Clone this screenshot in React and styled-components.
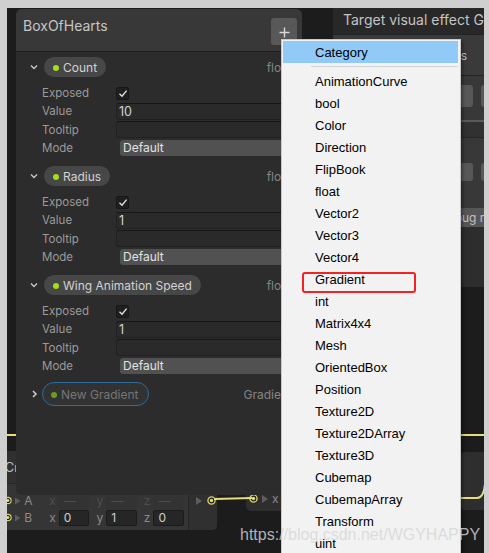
import React from 'react';
import styled, { createGlobalStyle } from 'styled-components';

const GlobalStyle = createGlobalStyle`
  html, body {
    margin: 0;
    padding: 0;
    background: #cfcfcf;
    overflow: hidden;
  }
  body {
    font-family: Inter, "Noto Sans", sans-serif;
  }
`;

const properties = [
  { name: 'Count', type: 'float', value: '10' },
  { name: 'Radius', type: 'float', value: '1' },
  { name: 'Wing Animation Speed', type: 'float', value: '1' },
];

const menuItems = [
  'AnimationCurve', 'bool', 'Color', 'Direction', 'FlipBook', 'float',
  'Vector2', 'Vector3', 'Vector4', 'Gradient', 'int', 'Matrix4x4', 'Mesh',
  'OrientedBox', 'Position', 'Texture2D', 'Texture2DArray', 'Texture3D',
  'Cubemap', 'CubemapArray', 'Transform', 'uint',
];

const ChevronDown = () => (
  <svg width="8" height="6" viewBox="0 0 8 6">
    <path d="M1 1.5 L4 4.5 L7 1.5" fill="none" stroke="#c8c8c8" strokeWidth="1.4" />
  </svg>
);

const ChevronRight = () => (
  <svg width="8" height="8" viewBox="0 0 8 8">
    <path d="M3 1 L6 4 L3 7" fill="none" stroke="#d0d0d0" strokeWidth="1.5" />
  </svg>
);

const Check = () => (
  <svg width="10" height="9" viewBox="0 0 10 9">
    <path d="M1.5 4.8 L4 7.2 L8.6 1.6" fill="none" stroke="#e6e6e6" strokeWidth="1.3" />
  </svg>
);

const Arrow = () => (
  <svg width="7" height="5" viewBox="0 0 7 5">
    <path d="M0 0 H7 L3.5 5 Z" fill="#c4c4c4" />
  </svg>
);

const Tri = () => (
  <svg width="6" height="8" viewBox="0 0 6 8">
    <path d="M0 0 L6 4 L0 8 Z" fill="#5e5e5e" />
  </svg>
);

const Port = ({ $filled = true }) => (
  <svg width="9" height="9" viewBox="0 0 9 9">
    <circle cx="4.5" cy="4.5" r="3.6" fill="#1f1f1f" stroke="#d9d36a" strokeWidth="1.3" />
    {$filled && <circle cx="4.5" cy="4.5" r="1.7" fill="#e2dc72" />}
  </svg>
);

const Frame = styled.div`
  position: relative;
  width: 489px;
  height: 553px;
  box-sizing: border-box;
  padding: 8px 5px 0 7px;
  background: #cfcfcf;
  overflow: hidden;
`;

const Canvas = styled.div`
  position: relative;
  width: 477px;
  height: 545px;
  background: #1c1c1c;
  overflow: hidden;
`;

const Edges = styled.svg`
  position: absolute;
  left: 0;
  top: 0;
  z-index: 2;
  pointer-events: none;
`;

/* graph nodes behind the panels */
const Node = styled.div`
  position: absolute;
  left: ${p => p.$x}px;
  top: ${p => p.$y}px;
  width: ${p => p.$w}px;
  height: ${p => p.$h}px;
  background: #2e2e2e;
  border-radius: 5px;
  display: flex;
  flex-direction: column;
  justify-content: flex-end;
  z-index: 1;
  font-size: 12px;
`;

const NodeTitle = styled.div`
  height: 32px;
  flex: none;
  display: flex;
  align-items: center;
  padding-left: 4px;
  color: #bdbdbd;
  font-size: 12.5px;
  background: #303030;
  border-bottom: 1px solid #262626;
  border-radius: 5px 5px 0 0;
`;

const NodeBody = styled.div`
  flex: 1;
  display: flex;
  background: #353535;
  border-radius: 0 0 5px 5px;
`;

const Inputs = styled.div`
  width: 187px;
  box-sizing: border-box;
  padding: ${p => (p.$flush ? 0 : 8)}px 0 4px 3px;
  display: flex;
  flex-direction: column;
`;

const Outputs = styled.div`
  flex: 1;
  background: #303030;
  border-left: 1px solid #272727;
  border-radius: 0 0 5px 0;
  padding: 8px 0 0 7px;
`;

const SlotRow = styled.div`
  height: 17px;
  display: flex;
  align-items: center;
  gap: ${p => p.$gap || 3}px;
  color: #8a8a8a;
`;

const SlotName = styled.span`
  width: 25px;
  margin-left: 1px;
`;

const Axis = styled.span`
  width: 7px;
  color: ${p => (p.$dim ? '#4e4e4e' : '#8a8a8a')};
`;

const AxisField = styled.div`
  width: 34px;
  height: 16px;
  box-sizing: border-box;
  margin-right: 4px;
  padding-left: 4px;
  border-radius: 2px;
  line-height: 14px;
  color: ${p => (p.$dim ? '#4e4e4e' : '#cfcfcf')};
  background: ${p => (p.$dim ? '#333333' : '#262626')};
  border: 1px solid ${p => (p.$dim ? '#333333' : '#1b1b1b')};
`;

/* blackboard */
const Blackboard = styled.section`
  position: absolute;
  left: 9px;
  top: 1px;
  width: 286px;
  height: 486px;
  background: #2c2c2c;
  border-radius: 6px;
  overflow: hidden;
  display: flex;
  flex-direction: column;
  z-index: 3;
`;

const BoardHeader = styled.header`
  height: 43px;
  flex: none;
  box-sizing: border-box;
  display: flex;
  justify-content: space-between;
  align-items: flex-start;
  padding: 8px 5px 0 7px;
  background: #383838;
  border-bottom: 1px solid #1f1f1f;
`;

const BoardTitle = styled.h1`
  margin: 0;
  font-size: 14px;
  line-height: 18px;
  font-weight: 400;
  color: #c6c6c6;
`;

const AddButton = styled.button`
  width: 26px;
  height: 27px;
  margin-top: 1px;
  padding: 2px 0 0;
  border: none;
  border-radius: 3px;
  background: #585858;
  display: flex;
  align-items: center;
  justify-content: center;
`;

const BoardBody = styled.div`
  padding-top: 3px;
`;

const Group = styled.div`
  margin-bottom: 7px;
`;

const PillRow = styled.div`
  height: 24px;
  display: flex;
  align-items: center;
  gap: 5px;
  padding: 0 10px 0 14px;
  margin-bottom: 5px;
`;

const Toggle = styled.span`
  width: 8px;
  display: flex;
  justify-content: center;
`;

const Pill = styled.div`
  height: ${p => (p.$dim ? 24 : 22)}px;
  box-sizing: border-box;
  display: inline-flex;
  align-items: center;
  gap: 4px;
  padding: 0 9px 0 ${p => (p.$dim ? 8 : 9)}px;
  margin-left: ${p => (p.$dim ? -1 : 0)}px;
  border-radius: 12px;
  white-space: nowrap;
  font-size: 12px;
  background: ${p => (p.$dim ? '#323232' : '#474747')};
  border: 1px solid ${p => (p.$dim ? '#2d6d9a' : '#2b2b2b')};
  color: ${p => (p.$dim ? '#767676' : '#d2d2d2')};
`;

const Dot = styled.span`
  width: 6px;
  height: 6px;
  border-radius: 50%;
  margin-top: 2px;
  background: ${p => (p.$dim ? '#6c9a24' : '#a2e01c')};
`;

const TypeName = styled.span`
  margin-left: auto;
  font-size: 12px;
  color: #858585;
`;

const PropRow = styled.div`
  height: 18.25px;
  display: grid;
  grid-template-columns: 74px 1fr;
  align-items: center;
  padding: 0 8px 0 26px;
`;

const PropLabel = styled.span`
  font-size: 11.5px;
  color: #9b9b9b;
`;

const CheckBox = styled.span`
  width: 13px;
  height: 13px;
  box-sizing: border-box;
  border-radius: 2px;
  background: #1f1f1f;
  border: 1px solid #171717;
  display: flex;
  align-items: center;
  justify-content: center;
`;

const TextField = styled.div`
  height: 17px;
  box-sizing: border-box;
  padding-left: 2px;
  border-radius: 3px;
  background: #2a2a2a;
  border: 1px solid #212121;
  border-top-color: #161616;
  font-size: 12.5px;
  line-height: 15px;
  color: #d4d4d4;
`;

const Dropdown = styled.div`
  height: 16px;
  margin-left: 4px;
  padding: 0 6px 0 3px;
  border-radius: 3px;
  background: #515151;
  display: flex;
  align-items: center;
  justify-content: space-between;
  font-size: 12px;
  color: #e2e2e2;
`;

/* inspector behind the menu */
const Inspector = styled.section`
  position: absolute;
  left: 326px;
  top: 0;
  width: 200px;
  height: 279px;
  background: #2d2d2d;
  display: flex;
  flex-direction: column;
  z-index: 3;
  font-size: 12px;
  color: #c0c0c0;
`;

const InspectorTitle = styled.div`
  height: 27px;
  flex: none;
  box-sizing: border-box;
  padding: 3px 0 0 10px;
  line-height: 18px;
  font-size: 14px;
  white-space: nowrap;
  overflow: hidden;
  color: #c4c4c4;
  background: #282828;
  border-bottom: 1px solid #222222;
`;

const InspectorRow = styled.div`
  height: 40px;
  display: flex;
  align-items: center;
  padding-left: 10px;
  background: #3a3a3a;
  border-bottom: 1px solid #232323;
`;

const RowText = styled.span`
  width: 124px;
  text-align: right;
  white-space: nowrap;
`;

const ButtonStrip = styled.div`
  height: ${p => p.$h}px;
  box-sizing: border-box;
  display: flex;
  gap: 8px;
  padding: ${p => p.$top}px 0 0 10px;
  background: #383838;
`;

const FlatButton = styled.span`
  width: 61px;
  height: ${p => p.$h}px;
  flex: none;
  border-radius: 3px;
  background: #585858;
`;

const Divider = styled.div`
  height: 15px;
  background: #313131;
  border-top: 2px solid #5a5a5a;
  border-bottom: 1px solid #262626;
`;

const Section = styled.div`
  display: flex;
  flex-direction: column;
  gap: 27px;
  padding-top: 25px;
  background: #383838;
`;

const ModeBar = styled.div`
  height: 19px;
  margin-left: 100px;
  padding-left: 6px;
  background: #565656;
  line-height: 19px;
  white-space: nowrap;
  overflow: hidden;
`;

/* popup menu */
const Menu = styled.ul`
  position: absolute;
  left: 274px;
  top: 31px;
  width: 180px;
  height: 530px;
  box-sizing: border-box;
  margin: 0;
  padding: 1px 2px 0 1px;
  list-style: none;
  background: #f2f2f2;
  border: 1px solid #c9c9c9;
  box-shadow: 2px 2px 3px rgba(0, 0, 0, 0.35);
  z-index: 5;
  font-family: "Liberation Sans", Arial, sans-serif;
  font-size: 13px;
  color: #000;
`;

const MenuItem = styled.li`
  height: 22px;
  line-height: 24px;
  padding-left: 32px;
  background: ${p => (p.$active ? '#91c9f7' : 'transparent')};
`;

const MenuSeparator = styled.li`
  height: 7px;
  margin-left: 28px;
  display: flex;
  align-items: center;

  &::before {
    content: '';
    flex: 1;
    border-top: 1px solid #d5d5d5;
  }
`;

const Highlight = styled.div`
  position: absolute;
  left: 295px;
  top: 264px;
  width: 114px;
  height: 21px;
  box-sizing: border-box;
  border: 2px solid #f42222;
  border-radius: 3px;
  z-index: 6;
`;

const Watermark = styled.div`
  position: absolute;
  left: 240px;
  top: 526px;
  font-family: "Liberation Sans", Arial, sans-serif;
  font-size: 16px;
  line-height: 18px;
  color: rgba(214, 214, 214, 0.82);
  white-space: nowrap;
  z-index: 10;
  pointer-events: none;
`;

const PropertyGroup = ({ prop }) => (
  <Group>
    <PillRow>
      <Toggle><ChevronDown /></Toggle>
      <Pill><Dot />{prop.name}</Pill>
      <TypeName>{prop.type}</TypeName>
    </PillRow>
    <PropRow>
      <PropLabel>Exposed</PropLabel>
      <CheckBox><Check /></CheckBox>
    </PropRow>
    <PropRow>
      <PropLabel>Value</PropLabel>
      <TextField>{prop.value}</TextField>
    </PropRow>
    <PropRow>
      <PropLabel>Tooltip</PropLabel>
      <TextField />
    </PropRow>
    <PropRow>
      <PropLabel>Mode</PropLabel>
      <Dropdown>Default<Arrow /></Dropdown>
    </PropRow>
  </Group>
);

const VectorSlot = ({ name, values, filled }) => (
  <SlotRow>
    <Port $filled={filled} />
    <Tri />
    <SlotName>{name}</SlotName>
    {['x', 'y', 'z'].map((axis, i) => (
      <React.Fragment key={axis}>
        <Axis $dim={!values}>{axis}</Axis>
        <AxisField $dim={!values}>{values ? values[i] : '—'}</AxisField>
      </React.Fragment>
    ))}
  </SlotRow>
);

export default function App() {
  return (
    <Frame>
      <GlobalStyle />
      <Canvas>
        <Node $x={-6} $y={444} $w={216} $h={78}>
          <NodeTitle>Cross Product</NodeTitle>
          <NodeBody>
            <Inputs>
              <VectorSlot name="A" filled />
              <VectorSlot name="B" values={['0', '1', '0']} />
            </Inputs>
            <Outputs>
              <SlotRow $gap={5}><Tri /><Port /></SlotRow>
            </Outputs>
          </NodeBody>
        </Node>

        <Node $x={239} $y={462} $w={80} $h={41}>
          <Inputs $flush>
            <SlotRow $gap={4}><Port /><Tri /><span>x</span></SlotRow>
          </Inputs>
        </Node>

        <Node $x={453} $y={444} $w={40} $h={58} />

        <Edges width="477" height="545">
          <path d="M0 427 H477" stroke="#e4de7c" strokeWidth="2" fill="none" />
          <path d="M207 491 L245 490" stroke="#e4de7c" strokeWidth="2" fill="none" />
          <path d="M454 490 L470 490 C474 490 477 486 478 476" stroke="#e4de7c" strokeWidth="2" fill="none" />
        </Edges>

        <Blackboard>
          <BoardHeader>
            <BoardTitle>BoxOfHearts</BoardTitle>
            <AddButton>
              <svg width="11" height="11" viewBox="0 0 11 11">
                <path d="M5.5 0.5 V10.5 M0.5 5.5 H10.5" stroke="#d8d8d8" strokeWidth="1.4" />
              </svg>
            </AddButton>
          </BoardHeader>
          <BoardBody>
            {properties.map(prop => (
              <PropertyGroup key={prop.name} prop={prop} />
            ))}
            <PillRow>
              <Toggle><ChevronRight /></Toggle>
              <Pill $dim><Dot $dim />New Gradient</Pill>
              <TypeName>Gradient</TypeName>
            </PillRow>
          </BoardBody>
        </Blackboard>

        <Inspector>
          <InspectorTitle>Target visual effect Graph</InspectorTitle>
          <InspectorRow><RowText>Show Properties</RowText></InspectorRow>
          <ButtonStrip $h={44} $top={9}>
            <FlatButton $h={22} />
            <FlatButton $h={22} />
            <FlatButton $h={22} />
          </ButtonStrip>
          <Divider />
          <Section>
            <ButtonStrip $h={18} $top={0}>
              <FlatButton $h={18} />
              <FlatButton $h={18} />
              <FlatButton $h={18} />
            </ButtonStrip>
            <ModeBar>Debug mode</ModeBar>
          </Section>
        </Inspector>

        <Menu>
          <MenuItem $active>Category</MenuItem>
          <MenuSeparator />
          {menuItems.map(item => (
            <MenuItem key={item}>{item}</MenuItem>
          ))}
        </Menu>
        <Highlight />
      </Canvas>
      <Watermark>https://blog.csdn.net/WGYHAPPY</Watermark>
    </Frame>
  );
}
